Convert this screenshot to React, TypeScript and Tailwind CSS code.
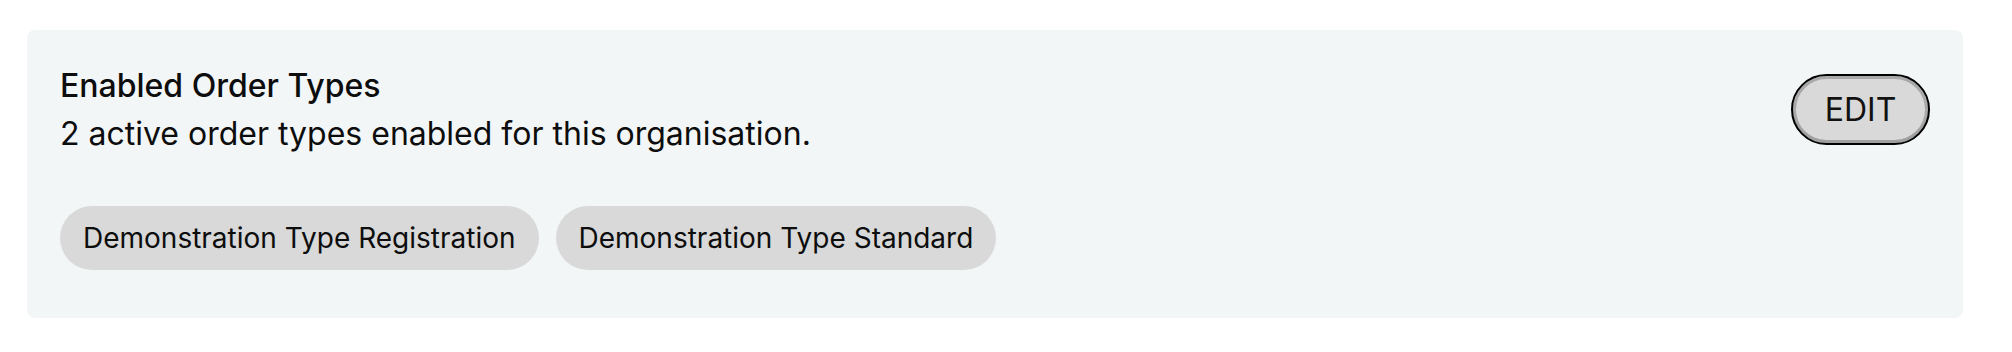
const orderTypes = ['Demonstration Type Registration', 'Demonstration Type Standard']

export default function App() {
  return (
    <div className="min-h-[352px] bg-white pt-[30px] pl-[27px] pr-[49px] font-['Inter','Noto_Sans',sans-serif] text-[#0d0d0d]">
      <section className="rounded-[8px] bg-[#f3f6f7] pt-[38px] pb-[48px] pl-[33px] pr-[33px]">
        <div className="flex items-start justify-between">
          <div>
            <h2 className="text-[32px] font-medium leading-[36px]">Enabled Order Types</h2>
            <p className="mt-[10px] text-[32px] leading-[40px]">
              {orderTypes.length} active order types enabled for this organisation.
            </p>
          </div>
          <button
            type="button"
            className="mt-[6px] h-[71px] w-[139px] rounded-full border-2 border-black bg-[#d8d9d8] text-[32px] leading-none text-[#111] shadow-[inset_0_-3px_0_#9fa09f,inset_0_0_0_3px_#a8a9a8]"
          >
            EDIT
          </button>
        </div>
        <div className="mt-[52px] flex flex-wrap gap-[17px]">
          {orderTypes.map((t) => (
            <span
              key={t}
              className="flex h-[64px] items-center rounded-full bg-[#d8d9d8] px-[23px] text-[28px] leading-none"
            >
              {t}
            </span>
          ))}
        </div>
      </section>
    </div>
  )
}
